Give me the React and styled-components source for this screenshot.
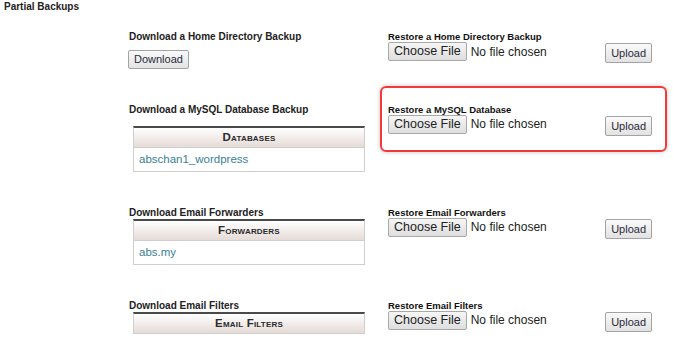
import React from "react";
import styled, { createGlobalStyle } from "styled-components";

const GlobalStyle = createGlobalStyle`
  html, body {
    margin: 0;
    padding: 0;
    background: #fff;
    font-family: "Liberation Sans", Arial, sans-serif;
    color: #222;
  }
`;

const Page = styled.div`
  width: 673px;
  height: 342px;
  overflow: hidden;
  padding: 1px 0 0 4px;
  box-sizing: border-box;
`;

const Title = styled.div`
  font-size: 10px;
  line-height: 12px;
  font-weight: bold;
  color: #222;
`;

const Rows = styled.div`
  margin-left: 125px;
`;

const Row = styled.div`
  display: grid;
  grid-template-columns: 251px 287px;
  align-items: start;
`;

const LeftCell = styled.div`
  padding: 18px 0 17px;
`;

const Label = styled.div`
  font-size: 10px;
  line-height: 12px;
  font-weight: bold;
  color: #222;
  margin-bottom: ${({ $gap }) => $gap}px;
`;

const RestoreBox = styled.div`
  border: 2px solid ${({ $active }) => ($active ? "#f23a3a" : "transparent")};
  border-radius: 6px;
  padding: 17px 13px 14px 6px;
  box-shadow: ${({ $active }) => ($active ? "0 0 4px rgba(0,0,0,0.25)" : "none")};
`;

const RestoreLabel = styled.div`
  font-size: 9.5px;
  line-height: 10px;
  font-weight: bold;
  color: #111;
`;

const FileRow = styled.div`
  display: flex;
  align-items: flex-start;
  justify-content: space-between;
`;

const FilePick = styled.div`
  display: flex;
  align-items: center;
  gap: 4px;
  font-family: "Liberation Sans", Arial, sans-serif;
  font-size: 12px;
  color: #222;
`;

const ChooseButton = styled.button`
  height: 19px;
  padding: 0 5px;
  font-family: inherit;
  font-size: 12.5px;
  color: #222;
  line-height: 17px;
  background: linear-gradient(#f6f6f6, #dedede);
  border: 1px solid #a8a8a8;
  border-radius: 2px;
`;

const PlainButton = styled.button`
  height: ${({ $h }) => $h}px;
  margin-top: ${({ $top }) => $top || 0}px;
  margin-left: ${({ $left }) => $left || 0}px;
  padding: 0 5px;
  font-family: "Liberation Sans", Arial, sans-serif;
  font-size: 11px;
  color: #2a2a3a;
  background: linear-gradient(#fafafa, #e2e2e2);
  border: 1px solid #a3a3a3;
  border-radius: 2px;
`;

const Table = styled.div`
  width: 232px;
  margin-left: 4px;
  border: 1px solid #cfcfcf;
  border-top: 2px solid #4a4a4a;
  box-sizing: border-box;
`;

const Head = styled.div`
  height: 19px;
  display: flex;
  align-items: center;
  justify-content: center;
  background: linear-gradient(#ffffff, #e5dbd7);
  font-size: 11.5px;
  font-weight: bold;
  font-variant: small-caps;
  letter-spacing: 0.2px;
  color: #2b2b2b;
`;

const Cell = styled.div`
  height: 23px;
  display: flex;
  align-items: center;
  padding-left: 5px;
  border-top: 1px solid #cfcfcf;
  font-size: 11.5px;
  color: #3a8095;
`;

const rows = [
  {
    download: "Download a Home Directory Backup",
    restore: "Restore a Home Directory Backup",
    button: true,
  },
  {
    download: "Download a MySQL Database Backup",
    restore: "Restore a MySQL Database",
    head: "Databases",
    items: ["abschan1_wordpress"],
    gap: 10,
    active: true,
  },
  {
    download: "Download Email Forwarders",
    restore: "Restore Email Forwarders",
    head: "Forwarders",
    items: ["abs.my"],
    gap: 0,
  },
  {
    download: "Download Email Filters",
    restore: "Restore Email Filters",
    head: "Email Filters",
    items: [],
    gap: 0,
  },
];

const App = () => {
  return (
    <>
      <GlobalStyle />
      <Page>
        <Title>Partial Backups</Title>
        <Rows>
          {rows.map((r) => (
            <Row key={r.download}>
              <LeftCell>
                <Label $gap={r.button ? 6 : r.gap}>{r.download}</Label>
                {r.button ? (
                  <PlainButton $h={19} $left={-1}>Download</PlainButton>
                ) : (
                  <Table>
                    <Head>{r.head}</Head>
                    {r.items.map((it) => (
                      <Cell key={it}>{it}</Cell>
                    ))}
                  </Table>
                )}
              </LeftCell>
              <RestoreBox $active={r.active}>
                <RestoreLabel>{r.restore}</RestoreLabel>
                <FileRow>
                  <FilePick>
                    <ChooseButton>Choose File</ChooseButton>
                    <span>No file chosen</span>
                  </FilePick>
                  <PlainButton $h={20} $top={1}>Upload</PlainButton>
                </FileRow>
              </RestoreBox>
            </Row>
          ))}
        </Rows>
      </Page>
    </>
  );
};

export default App;
